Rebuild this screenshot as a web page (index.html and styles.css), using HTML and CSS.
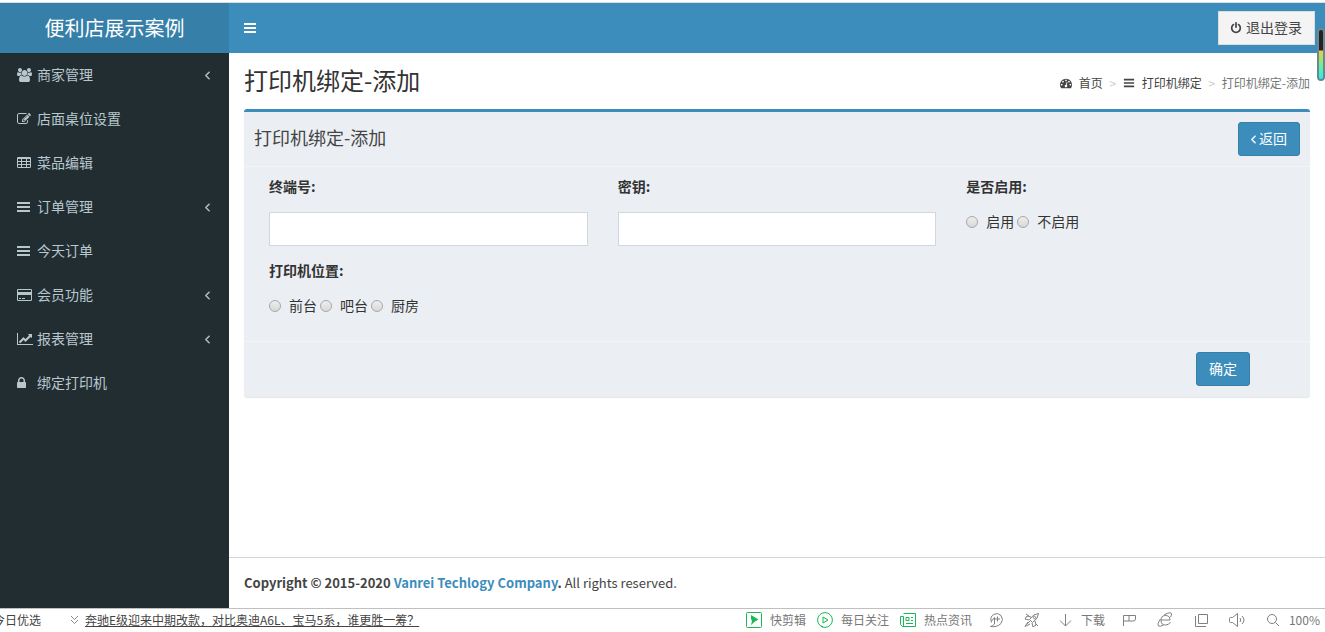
FILE: index.html
```html
<!DOCTYPE html>
<html lang="zh-CN">
<head>
<meta charset="utf-8">
<meta name="viewport" content="width=device-width, initial-scale=1">
<title>便利店展示案例</title>
<link rel="stylesheet" href="styles.css">
</head>
<body>
<svg class="sprite" aria-hidden="true">
  <symbol id="i-bars" viewBox="0 0 14 14"><path d="M1 2h12v2H1zM1 6h12v2H1zM1 10h12v2H1z"/></symbol>
  <symbol id="i-list" viewBox="0 0 14 14"><path d="M0 2h13v2H0zM0 6h13v2H0zM0 10h13v2H0z"/></symbol>
  <symbol id="i-angle" viewBox="600 0 640 1792"><path stroke="currentColor" stroke-width="60" d="M1203 544q0 13-10 23l-393 393 393 393q10 10 10 23t-10 23l-50 50q-10 10-23 10t-23-10l-466-466q-10-10-10-23t10-23l466-466q10-10 23-10t23 10l50 50q10 10 10 23z"/></symbol>
  <symbol id="i-power" viewBox="0 0 1792 1792"><path d="M1664 896q0 156-61 298t-164 245-245 164-298 61-298-61-245-164-164-245-61-298q0-182 80.5-343t226.5-270q43-32 95.5-25t83.5 50q32 42 24.5 94.5t-49.5 84.5q-98 74-151.5 181t-53.5 228q0 104 40.5 198.5t109.5 163.5 163.5 109.5 198.5 40.5 198.5-40.5 163.5-109.5 109.5-163.5 40.5-198.5q0-121-53.5-228t-151.5-181q-42-32-49.5-84.5t24.5-94.5q31-43 84-50t95 25q146 109 226.5 270t80.5 343zm-640-768v640q0 52-38 90t-90 38-90-38-38-90v-640q0-52 38-90t90-38 90 38 38 90z"/></symbol>
  <symbol id="i-lock" viewBox="320 0 1152 1792"><path d="M640 768h512v-192q0-106-75-181t-181-75-181 75-75 181v192zm832 96v576q0 40-28 68t-68 28h-960q-40 0-68-28t-28-68v-576q0-40 28-68t68-28h32v-192q0-184 132-316t316-132 316 132 132 316v192h32q40 0 68 28t28 68z"/></symbol>
  <symbol id="i-dash" viewBox="0 0 1792 1792"><path d="M384 1152q0-53-37.5-90.5t-90.5-37.5-90.5 37.5-37.5 90.5 37.5 90.5 90.5 37.5 90.5-37.5 37.5-90.5zm192-448q0-53-37.5-90.5t-90.5-37.5-90.5 37.5-37.5 90.5 37.5 90.5 90.5 37.5 90.5-37.5 37.5-90.5zm428 481l101-382q6-26-7.5-48.5t-38.5-29.5-48 6.5-30 39.5l-101 382q-60 5-107 43.5t-63 98.5q-20 77 20 146t117 89 146-20 89-117q16-60-6-117t-72-91zm660-33q0-53-37.5-90.5t-90.5-37.5-90.5 37.5-37.5 90.5 37.5 90.5 90.5 37.5 90.5-37.5 37.5-90.5zm-640-640q0-53-37.5-90.5t-90.5-37.5-90.5 37.5-37.5 90.5 37.5 90.5 90.5 37.5 90.5-37.5 37.5-90.5zm448 192q0-53-37.5-90.5t-90.5-37.5-90.5 37.5-37.5 90.5 37.5 90.5 90.5 37.5 90.5-37.5 37.5-90.5zm320 448q0 261-141 483-19 29-54 29h-1402q-35 0-54-29-141-221-141-483 0-182 71-348t191-286 286-191 348-71 348 71 286 191 191 286 71 348z"/></symbol>
  <symbol id="i-edit" viewBox="0 0 1792 1792"><path d="M888 1184l116-116-152-152-116 116v56h96v96h56zm440-720q-16-16-33 1l-350 350q-17 17-1 33t33-1l350-350q17-17 1-33zm80 594v190q0 119-84.5 203.5t-203.5 84.5h-832q-119 0-203.5-84.5t-84.5-203.5v-832q0-119 84.5-203.5t203.5-84.5h832q63 0 117 25 15 7 18 23 3 17-9 29l-49 49q-14 14-32 8-23-6-45-6h-832q-66 0-113 47t-47 113v832q0 66 47 113t113 47h832q66 0 113-47t47-113v-126q0-13 9-22l64-64q15-15 35-7t20 29zm-96-738l288 288-672 672h-288v-288zm444 132l-92 92-288-288 92-92q28-28 68-28t68 28l152 152q28 28 28 68t-28 68z"/></symbol>
  <symbol id="i-users" viewBox="-64 0 1920 1792"><path d="M529 896q-162 5-265 128h-134q-82 0-138-40.5t-56-118.5q0-353 124-353 6 0 43.5 21t97.5 42.5 119 21.5q67 0 133-23-5 37-5 66 0 139 81 256zm1071 637q0 120-73 189.5t-194 69.5h-874q-121 0-194-69.5t-73-189.5q0-53 3.5-103.5t14-109 26.5-108.5 43-97.5 62-81 85.5-53.5 111.5-20q10 0 43 21.5t73 48 107 48 135 21.5 135-21.5 107-48 73-48 43-21.5q61 0 111.5 20t85.5 53.5 62 81 43 97.5 26.5 108.5 14 109 3.5 103.5zm-1024-1277q0 106-75 181t-181 75-181-75-75-181 75-181 181-75 181 75 75 181zm704 384q0 159-112.5 271.5t-271.5 112.5-271.5-112.5-112.5-271.5 112.5-271.5 271.5-112.5 271.5 112.5 112.5 271.5zm576 225q0 78-56 118.5t-138 40.5h-134q-103-123-265-128 81-117 81-256 0-29-5-66 66 23 133 23 59 0 119-21.5t97.5-42.5 43.5-21q124 0 124 353zm-128-609q0 106-75 181t-181 75-181-75-75-181 75-181 181-75 181 75 75 181z"/></symbol>
  <symbol id="i-chart" viewBox="0 0 2048 1792"><path d="M2048 1536v128h-2048v-1536h128v1408h1920zm-128-1248v435q0 21-19.5 29.5t-35.5-7.5l-121-121-633 633q-10 10-23 10t-23-10l-233-233-416 416-192-192 585-585q10-10 23-10t23 10l233 233 464-464-121-121q-16-16-7.5-35.500t29.500-19.500h435q14 0 23 9t9 23z"/></symbol>
  <symbol id="i-table" viewBox="0 0 14 14"><path fill-rule="evenodd" d="M1.200 1h11.600q1.200 0 1.200 1.200v8.600q0 1.200-1.200 1.200H1.200Q0 12 0 10.800V2.200Q0 1 1.200 1zM1 3v2h3V3zM5 3v2h4V3zM10 3v2h3V3zM1 6v2h3V6zM5 6v2h4V6zM10 6v2h3V6zM1 9v2h3V9zM5 9v2h4V9zM10 9v2h3V9z"/></symbol>
  <symbol id="i-card" viewBox="0 0 15 14"><path fill-rule="evenodd" d="M1.300 1h12.400Q15 1 15 2.300v9.400q0 1.300-1.300 1.300H1.300Q0 13 0 11.700V2.300Q0 1 1.300 1zM1 2v2h13V2zM1 7v5h13V7zM2 10h2v1H2zM5 10h3v1H5z"/></symbol>
</svg>

<div class="app">
  <header class="topbar">
    <a class="logo" href="#">便利店展示案例</a>
    <nav class="navbar">
      <button class="toggle" type="button" aria-label="切换菜单"><svg class="icon"><use href="#i-bars"/></svg></button>
      <button class="logout" type="button"><svg class="icon small"><use href="#i-power"/></svg><span class="caption">退出登录</span></button>
    </nav>
  </header>

  <div class="main">
    <aside class="sidebar">
      <ul class="menu">
        <li><a href="#"><svg class="icon wide"><use href="#i-users"/></svg><span class="caption">商家管理</span><svg class="icon arrow"><use href="#i-angle"/></svg></a></li>
        <li><a href="#"><svg class="icon"><use href="#i-edit"/></svg><span class="caption">店面桌位设置</span></a></li>
        <li><a href="#"><svg class="icon"><use href="#i-table"/></svg><span class="caption">菜品编辑</span></a></li>
        <li><a href="#"><svg class="icon"><use href="#i-list"/></svg><span class="caption">订单管理</span><svg class="icon arrow"><use href="#i-angle"/></svg></a></li>
        <li><a href="#"><svg class="icon"><use href="#i-list"/></svg><span class="caption">今天订单</span></a></li>
        <li><a href="#"><svg class="icon wide"><use href="#i-card"/></svg><span class="caption">会员功能</span><svg class="icon arrow"><use href="#i-angle"/></svg></a></li>
        <li><a href="#"><svg class="icon widest"><use href="#i-chart"/></svg><span class="caption">报表管理</span><svg class="icon arrow"><use href="#i-angle"/></svg></a></li>
        <li><a href="#"><svg class="icon narrow"><use href="#i-lock"/></svg><span class="caption">绑定打印机</span></a></li>
      </ul>
    </aside>

    <div class="page">
      <main class="content">
        <div class="heading">
          <h1>打印机绑定-添加</h1>
          <ol class="crumbs">
            <li><a href="#"><svg class="icon small"><use href="#i-dash"/></svg>首页</a></li>
            <li><a href="#"><svg class="icon small"><use href="#i-bars"/></svg>打印机绑定</a></li>
            <li>打印机绑定-添加</li>
          </ol>
        </div>

        <form class="box">
          <div class="box-header">
            <h2>打印机绑定-添加</h2>
            <button class="btn" type="button"><svg class="back"><use href="#i-angle"/></svg><span class="caption">返回</span></button>
          </div>
          <div class="box-body">
            <div class="field">
              <label class="title" for="terminal">终端号:</label>
              <input class="text" id="terminal" type="text">
            </div>
            <div class="field">
              <label class="title" for="secret">密钥:</label>
              <input class="text" id="secret" type="text">
            </div>
            <fieldset class="field">
              <legend class="title">是否启用:</legend>
              <div class="radios">
                <label><input type="radio" name="enabled"><span class="caption">启用</span></label>
                <label><input type="radio" name="enabled"><span class="caption">不启用</span></label>
              </div>
            </fieldset>
            <fieldset class="field">
              <legend class="title">打印机位置:</legend>
              <div class="radios">
                <label><input type="radio" name="place"><span class="caption">前台</span></label>
                <label><input type="radio" name="place"><span class="caption">吧台</span></label>
                <label><input type="radio" name="place"><span class="caption">厨房</span></label>
              </div>
            </fieldset>
          </div>
          <div class="box-footer"><button class="btn" type="submit"><span class="caption">确定</span></button></div>
        </form>
      </main>
      <footer class="copyright"><strong>Copyright © 2015-2020 <a href="#">Vanrei Techlogy Company</a>.</strong> All rights reserved.</footer>
    </div>
  </div>

  <div class="statusbar">
    <span class="picks">今日优选</span>
    <svg class="chev" viewBox="0 0 9 10"><path d="M1 1l3.500 3.500L8 1M1 5l3.500 3.500L8 5"/></svg>
    <a class="news" href="#">奔驰E级迎来中期改款，对比奥迪A6L、宝马5系，谁更胜一筹？</a>
    <div class="tools">
      <button type="button"><svg class="tool green" viewBox="0 0 16 16"><rect x=".5" y=".5" width="15" height="15" rx="1"/><path class="solid" d="M5 3l7.500 4.500L9 9.500l-4 3.500 1-4-1-2z"/></svg>快剪辑</button>
      <button type="button"><svg class="tool green" viewBox="0 0 16 16"><circle cx="8" cy="8" r="7.400"/><path d="M6 5v6l5-3zM4 14l2 1"/></svg>每日关注</button>
      <button type="button"><svg class="tool green" viewBox="0 0 16 16"><path d="M3.500 1.500h12v13H2.500l-2-2v-8h3v10M6 5.500h3v3H6zM11 5.500h2M11 8.500h2M6 11.500h7"/></svg>热点资讯</button>
    </div>
    <div class="tray">
      <button type="button" aria-label="加速"><svg class="tool" viewBox="0 0 16 16"><path d="M3.500 10.500Q1.500 5 5.500 2.500 10 0 13 3.500q3 4 0 8-4 4-10.500 3Q5 14 6.500 12V5.500L3.500 9M9.500 4.500v5M7 7h5"/></svg></button>
      <button type="button" aria-label="火箭"><svg class="tool" viewBox="0 0 16 16"><path d="M14.500 1.500q-5 0-9 6l3 3q6-4 6-9zM7 5L3 4l-2 3 4 1M11 9l1 4-3 2-1-4M4 10l-3 4.500L6 12M3 12l3-3M2 2l3 2M12 12l2 2"/><circle cx="10.500" cy="5.500" r="1.200"/></svg></button>
      <button class="download" type="button"><svg class="tool" viewBox="0 0 16 16"><path d="M8.500 2v12M3 8.500L8.500 14 14 8.500"/></svg>下载</button>
      <button type="button" aria-label="旗标"><svg class="tool" viewBox="0 0 16 16"><path d="M2.500 14V3.500H8V9H2.500M8 3.500h6.500V7q0 2-2.500 2H8"/></svg></button>
      <button type="button" aria-label="内核"><svg class="tool" viewBox="0 0 16 16"><path d="M4 8h9q0-4.500-4.500-4.500T4 8.500q0 4.500 4.500 4.500Q12 13 13.500 10M7 3q7-4 7.500-1 .3 1-1 3M3.500 7Q0 12 1.500 14q1.500 1 5-1"/></svg></button>
      <button type="button" aria-label="窗口"><svg class="tool" viewBox="0 0 16 16"><path d="M5.500 2.500h9v9h-9zM2.500 4v10.500H13"/></svg></button>
      <button type="button" aria-label="声音"><svg class="tool" viewBox="0 0 16 16"><path d="M1.500 5.500h2l5-4v13l-5-4h-2q-1 0-1-1v-3q0-1 1-1zM11 6q1.500 2 0 4M13 4q4 4 0 8"/></svg></button>
      <button type="button"><svg class="tool" viewBox="0 0 16 16"><circle cx="7" cy="7" r="4.500"/><path d="M10.500 10.500L14 14"/></svg>100%</button>
    </div>
  </div>
  <div class="meter" aria-hidden="true"></div>
</div>
</body>
</html>
```
FILE: styles.css
```css
* { box-sizing: border-box; }

body {
  margin: 0;
  background: #fff;
  color: #333;
  font: 14px/20px "Noto Sans CJK SC", sans-serif;
}

a { color: inherit; text-decoration: none; }
button { font: inherit; color: inherit; cursor: pointer; }
h1, h2, ul, ol { margin: 0; padding: 0; font-weight: 400; list-style: none; }

.sprite { position: absolute; width: 0; height: 0; }
.icon { flex: none; width: 14px; height: 14px; fill: currentColor; }
.icon.narrow { width: 9px; }
.icon.wide { width: 15px; }
.icon.widest { width: 16px; }
.icon.small { width: 12px; height: 12px; }
.caption { padding-bottom: 2px; line-height: 18px; }

.app {
  position: relative;
  display: flex;
  flex-direction: column;
  min-height: 100vh;
}

/* Top bar */
.topbar {
  display: flex;
  margin-top: 2px;
  border-top: 1px solid #dcdcdc;
  background: #3c8dbc;
  color: #fff;
}
.logo {
  flex: none;
  width: 229px;
  background: #367fa9;
  font-size: 20px;
  line-height: 50px;
  text-align: center;
}
.navbar {
  flex: 1;
  display: flex;
  align-items: center;
  justify-content: space-between;
  padding-right: 10px;
}
.toggle {
  display: flex;
  padding: 18px 14px;
  border: 0;
  background: none;
}
.logout {
  display: flex;
  align-items: center;
  gap: 4px;
  padding: 6px 12px 6px 11px;
  border: 1px solid #ddd;
  background: #f4f4f4;
  color: #444;
}

/* Side menu */
.main { flex: 1; display: flex; }
.sidebar { flex: none; width: 229px; background: #222d32; color: #b8c7ce; }
.menu a {
  display: flex;
  align-items: center;
  padding: 12px 19px 12px 17px;
}
.menu .icon { margin-right: 6px; }
.menu .wide { margin-right: 5px; }
.menu .widest { margin-right: 4px; }
.menu .narrow { margin-right: 11px; }
.menu .arrow { width: 5px; margin: 0 0 0 auto; }

/* Content */
.page { flex: 1; display: flex; flex-direction: column; min-width: 0; }
.content { flex: 1; padding: 15px; }
.heading {
  display: flex;
  justify-content: space-between;
  align-items: flex-end;
  margin-bottom: 17px;
}
.heading h1 { font-size: 24px; line-height: 24px; }
.crumbs {
  display: flex;
  font-size: 12px;
  line-height: 18px;
  color: #777;
}
.crumbs li { display: flex; }
.crumbs li + li::before { content: ">"; width: 20px; color: #ccc; text-align: center; }
.crumbs a { display: flex; align-items: center; gap: 7px; color: #444; }

.box {
  border-top: 3px solid #3c8dbc;
  border-radius: 3px;
  background: #ebeff4;
  box-shadow: 0 1px 1px rgba(0, 0, 0, .1);
}
.box-header {
  display: flex;
  justify-content: space-between;
  padding: 10px;
  border-bottom: 1px solid #f4f4f4;
  color: #444;
}
.box-header h2 { font-size: 18px; line-height: 31px; }
.btn {
  display: flex;
  align-items: center;
  padding: 6px 12px;
  border: 1px solid #367fa9;
  border-radius: 3px;
  background: #3c8dbc;
  color: #fff;
}
.back { width: 5px; height: 14px; margin-right: 3px; fill: currentColor; }
.box-body {
  display: grid;
  grid-template-columns: repeat(3, 1fr);
  padding: 10px;
}
.field {
  min-width: 0;
  margin: 0 0 15px;
  padding: 0 15px;
  border: 0;
}
.title {
  display: block;
  margin-bottom: 17px;
  padding: 0;
  font-weight: 700;
  line-height: 18px;
}
.text {
  display: block;
  width: 100%;
  height: 34px;
  padding: 6px 12px;
  border: 1px solid #d2d6de;
  background: #fff;
  font: inherit;
}
.radios { display: flex; gap: 3px; }
.radios label { display: flex; align-items: center; gap: 8px; }
.radios input {
  appearance: none;
  width: 12px;
  height: 12px;
  margin: 0;
  border: 1px solid #a8a8a8;
  border-radius: 50%;
  background: linear-gradient(#eee, #d8d8d8);
}
.box-footer {
  display: flex;
  justify-content: flex-end;
  padding: 10px 60px 11px;
  border-top: 1px solid #f4f4f4;
}
.copyright {
  padding: 15px;
  border-top: 1px solid #d2d6de;
  color: #444;
  font-size: 13px;
}
.copyright a { color: #3c8dbc; }

/* Browser status bar */
.statusbar {
  display: flex;
  align-items: center;
  height: 24px;
  padding: 0 5px 2px 0;
  border-top: 1px solid #c0c0c0;
  color: #444;
  font-size: 12px;
  white-space: nowrap;
}
.picks { display: flex; justify-content: flex-end; width: 41px; overflow: hidden; }
.chev { width: 9px; height: 10px; margin: 0 6px 0 29px; fill: none; stroke: #888; }
.news { text-decoration: underline; }
.tools, .tray { display: flex; color: #777; }
.tools { gap: 11px; margin-left: auto; }
.tray { gap: 20px; margin-left: 16px; }
.download { margin: 0 -4px 0 -3px; }
.statusbar button { display: flex; align-items: center; gap: 8px; }
.statusbar button { padding: 0; border: 0; background: none; }
.tool { flex: none; width: 16px; height: 16px; fill: none; stroke: #808080; }
.green { stroke: #19b955; }
.solid { fill: #19b955; stroke: none; }

/* Floating meter over the page's right edge */
.meter {
  position: absolute;
  top: 28px;
  right: 0;
  width: 8px;
  height: 53px;
  border: 2px solid #6b8794;
  border-radius: 4px;
  background: linear-gradient(#222 0 20px, #e8d040 21px, #70f090 35px, #20f0f0);
}
```
